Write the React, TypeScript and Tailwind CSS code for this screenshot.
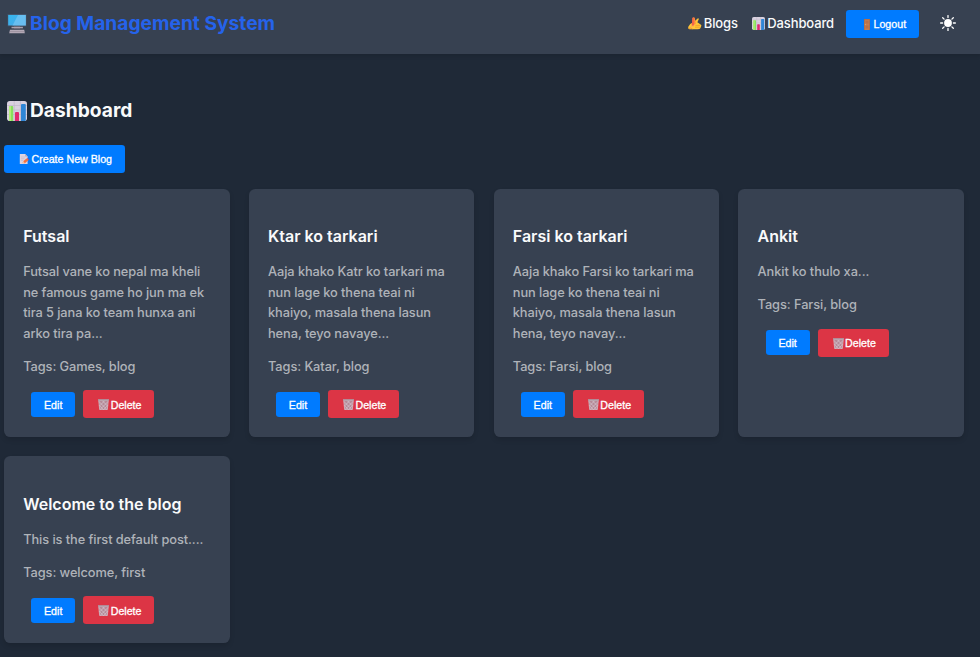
import React from "react";

type Post = { title: string; body: string; tags: string };

const posts: Post[] = [
  {
    title: "Futsal",
    body: "Futsal vane ko nepal ma kheli ne famous game ho jun ma ek tira 5 jana ko team hunxa ani arko tira pa...",
    tags: "Games, blog",
  },
  {
    title: "Ktar ko tarkari",
    body: "Aaja khako Katr ko tarkari ma nun lage ko thena teai ni khaiyo, masala thena lasun hena, teyo navaye...",
    tags: "Katar, blog",
  },
  {
    title: "Farsi ko tarkari",
    body: "Aaja khako Farsi ko tarkari ma nun lage ko thena teai ni khaiyo, masala thena lasun hena, teyo navay...",
    tags: "Farsi, blog",
  },
  { title: "Ankit", body: "Ankit ko thulo xa...", tags: "Farsi, blog" },
  {
    title: "Welcome to the blog",
    body: "This is the first default post....",
    tags: "welcome, first",
  },
];

function ComputerIcon() {
  return (
    <svg className="h-[20px] w-[20px] shrink-0" viewBox="0 0 20 20" aria-hidden="true">
      <defs>
        <linearGradient id="screen" x1="0" y1="0" x2="1" y2="1">
          <stop offset="0" stopColor="#35b7ef" />
          <stop offset="1" stopColor="#4ba6e6" />
        </linearGradient>
      </defs>
      <rect x="0.6" y="0" width="18.8" height="12.3" rx="0.6" fill="#44566d" />
      <rect x="1.2" y="1" width="17.6" height="10.4" fill="url(#screen)" />
      <path d="M18.8 1H11L5.5 11.4H18.8Z" fill="#7cc8f5" opacity=".65" />
      <path d="M7 12.3h6v2.4H7z" fill="#68606f" />
      <path d="M4.5 12.8h11.4v1.5H4.5z" fill="#aaa1ae" />
      <path d="M3 15.8h14.2l.6 3.4H2.2z" fill="#b5abb8" />
      <path d="M2.8 17.6h14.6" stroke="#8d8390" strokeWidth=".6" />
    </svg>
  );
}

function ChartIcon({ className }: { className: string }) {
  return (
    <svg className={className} viewBox="0 0 20 20" aria-hidden="true">
      <rect width="20" height="20" rx="2.8" fill="#d9d1df" />
      <path d="M0 4.5h20M0 9h20M0 13.5h20M7.2 0v20M13.4 0v20" stroke="#c2b7ca" strokeWidth=".7" />
      <path d="M2 6q0-1 1-1h2.2q1 0 1 1v14H3q-1 0-1-1z" fill="#86e05c" />
      <path d="M2 6q0-1 1-1h1v15H3q-1 0-1-1z" fill="#b3ec78" />
      <path d="M8 12q0-1 1-1h2q1 0 1 1v8H8z" fill="#e0296f" />
      <path d="M14 4q0-1 1-1h2.8q1 0 1 1v15q0 1-1 1H14z" fill="#2f86d6" />
    </svg>
  );
}

function WritingIcon() {
  return (
    <svg className="h-[13px] w-[14px] shrink-0" viewBox="0 0 14 13" aria-hidden="true">
      <path d="M.3 9.8 2.2 7 6.4 4.4 9.6 1.4Q10.8.8 10.8 2.2L9.4 5.2 12.6 7.4Q13.7 8.2 13.2 9.2L12.4 11.2Q11.8 12.3 9.6 12.3L1.4 12.3Q-.2 11.8.3 9.8Z" fill="#ffc638" />
      <path d="M4.4.9Q5.4-.3 6.8.8L7.6 6.2 5.2 9.2 3.8 8.2Z" fill="#ff8a3c" />
      <path d="M4.4.9Q4.9.3 5.5.4L5.9 7.8 5.2 9.2 3.8 8.2Z" fill="#f0604a" />
      <path d="M7.6 6.2 5.2 9.2 3.8 8.2 2.6 10.9Z" fill="#f3a069" />
      <path d="M7.4 8.4h4.6M7 10.2h4.8" stroke="#e99528" strokeWidth=".7" fill="none" />
      <path d="M.4 11.4Q2.8 10.5 4.6 12.1" stroke="#de8633" strokeWidth=".7" fill="none" />
    </svg>
  );
}

function DoorIcon() {
  return (
    <svg className="ml-1 h-[11px] w-[6px] shrink-0" viewBox="0 0 6 11" aria-hidden="true">
      <path d="M0 0h6v11H0z" fill="#a9694a" />
      <path d="M.6.6h4.8V11H.6z" fill="#c47d52" />
      <path d="M1.5 1.7h3v2.7h-3zM1.5 6.6h3v2.9h-3z" fill="#ba7148" />
      <circle cx="1.3" cy="5.5" r=".5" fill="#e6b45c" />
    </svg>
  );
}

function MemoIcon() {
  return (
    <svg className="h-[10px] w-[10px] shrink-0" viewBox="0 0 10 10" aria-hidden="true">
      <path d="M.8 0h5.4l2.4 2.4V10H.8z" fill="#ddd4e1" />
      <path d="M6.2 0v2.4h2.4z" fill="#b3a8ba" />
      <path d="M2 3h4M2 4.7h3.4M2 6.4h2" stroke="#c2b6c8" strokeWidth=".6" />
      <path d="m3.6 9 .8-2L7.6 4.4l1.9 1.8L5.8 9.2z" fill="#f4713f" />
      <path d="m7.6 4.4.7-.5 1.6 1.5-.4.8z" fill="#e5484f" />
      <path d="M3.4 9.2l1-2.2L5.8 9.2z" fill="#f6c39f" />
    </svg>
  );
}

function TrashIcon() {
  return (
    <svg className="h-[11px] w-[11px] shrink-0" viewBox="0 0 11 11" aria-hidden="true">
      <path d="M.7 1.5h9.6L9.3 10.7H1.7z" fill="#b58a98" />
      <path
        d="M1.5 7 6.8 1.6M2.2 10.4l7.6-7.6M5.6 10.6l4-4M9.5 7 4.2 1.6M8.8 10.4 1.2 2.8M5.4 10.6 1.4 6.6"
        stroke="#ddd2dc"
        strokeWidth=".6"
      />
      <path d="M.7 1.5h9.6L9.3 10.7H1.7z" fill="none" stroke="#d2c7d0" strokeWidth=".7" />
      <path d="M0 .2h11v1.4H0z" fill="#aaa0ab" />
    </svg>
  );
}

function SunIcon() {
  return (
    <svg className="h-4 w-4" viewBox="0 0 16 16" aria-hidden="true">
      <circle cx="8" cy="8" r="3.9" fill="#fff" />
      <path
        d="M8 .6v2M8 13.4v2M.6 8h2M13.4 8h2M2.7 2.7l1.4 1.4M11.9 11.9l1.4 1.4M13.3 2.7l-1.4 1.4M4.1 11.9l-1.4 1.4"
        stroke="#fff"
        strokeWidth="1.3"
        strokeLinecap="round"
      />
    </svg>
  );
}

const buttonText =
  "font-['Liberation_Sans',Arial,sans-serif] text-[10.67px] font-medium text-white [-webkit-text-stroke:0.3px_white]";

function PostCard({ post }: { post: Post }) {
  return (
    <article className="rounded-[6.4px] bg-[#374151] p-[19.2px] shadow-[0_3px_5px_rgba(0,0,0,0.12)]">
      <h3 className="mt-4 text-[16px] leading-[25.6px] font-semibold whitespace-nowrap text-[#f9fafb]">
        {post.title}
      </h3>
      <p className="mt-[12.4px] text-[12.8px] leading-[20.48px] font-medium tracking-[-0.07px] text-[#afb3b9]">
        {post.body}
      </p>
      <p className="mt-[12.8px] text-[12.8px] leading-[20.48px] font-medium tracking-[-0.07px] text-[#afb3b9]">
        Tags: {post.tags}
      </p>
      <div className="mt-[13px] ml-2 flex h-[27.6px] items-center gap-2">
        <button className={`${buttonText} h-[25px] w-11 rounded-[3.2px] bg-[#007bff] pt-px`}>Edit</button>
        <button className={`${buttonText} flex h-full w-[71px] items-center gap-[1.5px] rounded-[3.2px] bg-[#dc3545] pt-px pl-[15px]`}>
          <TrashIcon />
          Delete
        </button>
      </div>
    </article>
  );
}

export default function App() {
  return (
    <div className="h-[657px] overflow-hidden bg-[#1f2937] font-['Inter',sans-serif] text-[#f9fafb]">
      <header className="flex h-[54px] items-start justify-between bg-[#374151] pr-6 pl-[7px] shadow-[0_2px_4px_rgba(0,0,0,0.12)]">
        <div className="flex h-[47px] items-center gap-[3px] text-[19.2px] font-bold whitespace-nowrap text-[#2563eb]">
          <ComputerIcon />
          <span>Blog Management System</span>
        </div>
        <nav className="flex h-[47px] items-center text-[13px] font-medium tracking-[-0.13px] whitespace-nowrap">
          <a className="flex items-center gap-[2px]">
            <WritingIcon />
            Blogs
          </a>
          <a className="ml-[14.5px] flex items-center gap-[2px]">
            <ChartIcon className="h-[13px] w-[13px] shrink-0" />
            Dashboard
          </a>
          <button className={`${buttonText} mt-px ml-[12px] flex h-7 w-[73px] items-center gap-1 rounded-[3.2px] bg-[#007bff] pl-[13.5px] tracking-normal`}>
            <DoorIcon />
            Logout
          </button>
          <button className="mb-[2px] ml-[21px]" aria-label="Toggle theme">
            <SunIcon />
          </button>
        </nav>
      </header>
      <main className="px-1 pt-10">
        <h2 className="flex h-[33px] items-center gap-[3px] pl-[3px] text-[19.2px] font-bold">
          <ChartIcon className="h-5 w-5 shrink-0" />
          Dashboard
        </h2>
        <button className={`${buttonText} mt-[18px] flex h-7 w-[121px] items-center gap-[2.5px] rounded-[3.2px] bg-[#007bff] pl-[15px] whitespace-nowrap`}>
          <MemoIcon />
          Create New Blog
        </button>
        <section className="mt-4 grid w-[960px] grid-cols-4 gap-[19.2px]">
          {posts.map((post) => (
            <PostCard key={post.title} post={post} />
          ))}
        </section>
      </main>
    </div>
  );
}
